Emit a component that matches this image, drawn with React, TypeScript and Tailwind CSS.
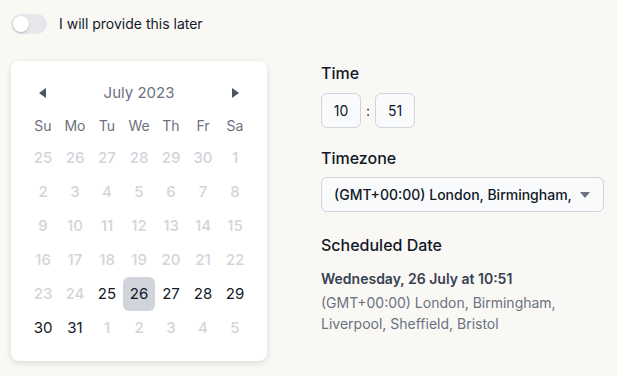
import React from 'react';

type Day = { n: number; active?: boolean; selected?: boolean };

const weeks: Day[][] = [
  [25, 26, 27, 28, 29, 30, 1].map((n) => ({ n })),
  [2, 3, 4, 5, 6, 7, 8].map((n) => ({ n })),
  [9, 10, 11, 12, 13, 14, 15].map((n) => ({ n })),
  [16, 17, 18, 19, 20, 21, 22].map((n) => ({ n })),
  [
    { n: 23 },
    { n: 24 },
    { n: 25, active: true },
    { n: 26, active: true, selected: true },
    { n: 27, active: true },
    { n: 28, active: true },
    { n: 29, active: true },
  ],
  [{ n: 30, active: true }, { n: 31, active: true }, ...[1, 2, 3, 4, 5].map((n) => ({ n }))],
];

const weekdays = ['Su', 'Mo', 'Tu', 'We', 'Th', 'Fr', 'Sa'];

function Calendar() {
  return (
    <div className="w-[256px] rounded-lg bg-white px-4 py-4 shadow-[0_2px_6px_rgba(0,0,0,0.12)]">
      <div className="flex h-8 items-center justify-between px-3">
        <svg width="7" height="10" viewBox="0 0 7 10">
          <path d="M7 0 L0 5 L7 10 Z" fill="#4b5563" />
        </svg>
        <span className="text-[15px] text-[#6b7280]">July 2023</span>
        <svg width="7" height="10" viewBox="0 0 7 10">
          <path d="M0 0 L7 5 L0 10 Z" fill="#4b5563" />
        </svg>
      </div>
      <div className="grid grid-cols-7">
        {weekdays.map((d) => (
          <div key={d} className="flex h-8 items-center justify-center text-[14px] text-[#6b7280]">
            {d}
          </div>
        ))}
      </div>
      {weeks.map((week, i) => (
        <div key={i} className="grid grid-cols-7">
          {week.map((day, j) => (
            <div
              key={j}
              className={
                day.selected
                  ? 'flex h-[34px] items-center justify-center rounded-md bg-[#d1d5db] text-[15px] text-[#111827]'
                  : day.active
                    ? 'flex h-[34px] items-center justify-center text-[15px] text-[#111827]'
                    : 'flex h-[34px] items-center justify-center text-[15px] font-medium text-[#d1d5db]'
              }
            >
              {day.n}
            </div>
          ))}
        </div>
      ))}
    </div>
  );
}

export default function App() {
  return (
    <div
      className="h-[376px] w-[617px] overflow-hidden bg-[#f9f8f5] px-[11px] pt-[13px] text-[#111827]"
      style={{ fontFamily: 'Inter, "Noto Sans", sans-serif' }}
    >
      <div className="flex items-center gap-3">
        <div className="flex h-5 w-9 items-center rounded-full bg-[#e5e7eb] p-[2px]">
          <div className="h-4 w-4 rounded-full bg-white shadow-[0_1px_2px_rgba(0,0,0,0.2)]" />
        </div>
        <span className="text-[14px] text-[#111827]">I will provide this later</span>
      </div>

      <div className="mt-[27px] flex gap-[54px]">
        <Calendar />

        <div className="flex w-[283px] flex-col">
          <div className="text-[16px] font-medium leading-6 text-[#111827]">Time</div>
          <div className="mt-2 flex items-center gap-[5px]">
            <div className="flex h-[35px] w-[40px] items-center justify-center rounded-md border border-[#d1d5db] bg-[#f9fafb] text-[14px]">
              10
            </div>
            <span className="text-[14px]">:</span>
            <div className="flex h-[35px] w-[40px] items-center justify-center rounded-md border border-[#d1d5db] bg-[#f9fafb] text-[14px]">
              51
            </div>
          </div>

          <div className="mt-[18px] text-[16px] font-medium leading-6 text-[#111827]">Timezone</div>
          <div className="mt-[7px] flex h-[35px] items-center justify-between rounded-md border border-[#d1d5db] bg-[#f9fafb] pl-3 pr-[13px]">
            <span className="text-[14px] font-medium text-[#111827]">(GMT+00:00) London, Birmingham,</span>
            <svg width="10" height="6" viewBox="0 0 10 6">
              <path d="M0 0 L10 0 L5 6 Z" fill="#6b7280" />
            </svg>
          </div>

          <div className="mt-[21px] text-[16px] font-medium leading-6 text-[#111827]">Scheduled Date</div>
          <div className="mt-3 text-[14px] font-semibold leading-5 text-[#374151]">Wednesday, 26 July at 10:51</div>
          <div className="mt-[3px] text-[14px] leading-[21px] text-[#6b7280]">
            (GMT+00:00) London, Birmingham,
            <br />
            Liverpool, Sheffield, Bristol
          </div>
        </div>
      </div>
    </div>
  );
}
